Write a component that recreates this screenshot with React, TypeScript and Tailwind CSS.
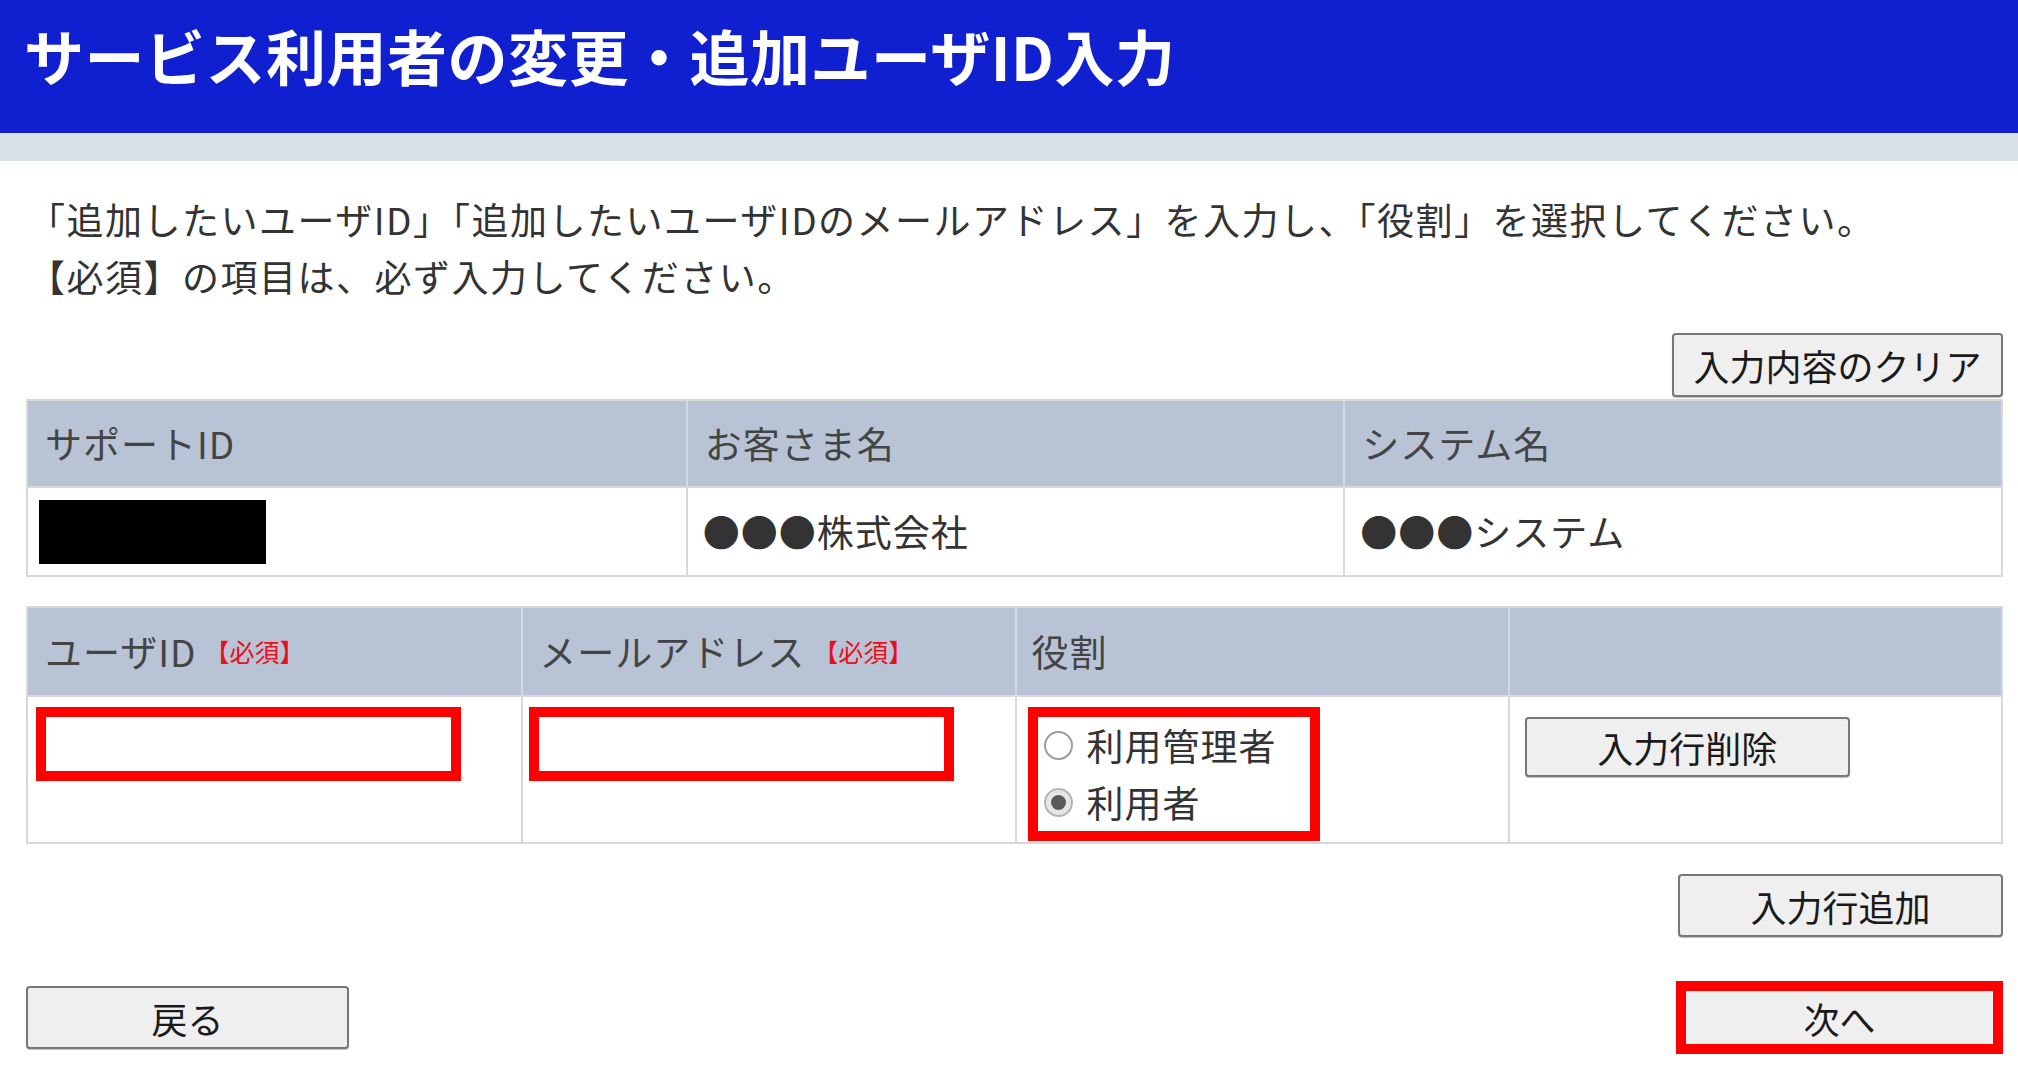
import React from "react";

const btn =
  "flex items-center justify-center bg-[#efefef] border-2 border-[#777777] rounded-[4px] text-[36px] text-[#1a1a1a] leading-none shadow-[0_1px_1px_rgba(0,0,0,0.25)]";

function RedMark() {
  return <span className="ml-[8px] text-[25px] tracking-normal text-[#e8101c]">【必須】</span>;
}

function Radio({ checked }: { checked?: boolean }) {
  return checked ? (
    <span className="flex h-[29px] w-[29px] shrink-0 items-center justify-center rounded-full border-2 border-[#b5b5b5] bg-[#e6e6e6]">
      <span className="h-[15px] w-[15px] rounded-full bg-[#5a5a5a]" />
    </span>
  ) : (
    <span className="h-[29px] w-[29px] shrink-0 rounded-full border-2 border-[#9d9d9d] bg-white" />
  );
}

export default function App() {
  return (
    <div className="w-[2018px] h-[1073px] overflow-hidden bg-white font-[Noto_Sans_CJK_JP,sans-serif]">
      {/* Title bar */}
      <div className="h-[133px] bg-[#1020d0] pl-[24px]">
        <h1 className="text-[60px] font-bold leading-[110px] tracking-[0.5px] text-white">
          サービス利用者の変更・追加ユーザID入力
        </h1>
      </div>
      <div className="h-[28px] bg-[#d9dfe8]" />

      <div className="pl-[26px] pr-[15px]">
        {/* Instructions */}
        <div className="mt-[30px] text-[37px] leading-[57px] tracking-[1.5px] text-[#333333]">
          <p className="pl-[2px]">
            「追加したいユーザID」「追加したいユーザIDのメールアドレス」を入力し、「役割」を選択してください。
          </p>
          <p className="pl-[2px]">【必須】の項目は、必ず入力してください。</p>
        </div>

        {/* Clear button */}
        <div className="mt-[28px] flex justify-end">
          <button className={`${btn} h-[64px] w-[331px]`}>入力内容のクリア</button>
        </div>

        {/* Table 1 */}
        <div className="mt-[2px] border-2 border-[#d8d8d8] text-[37px] tracking-[1px]">
          <div className="grid h-[85px] grid-cols-3 bg-[#b8c4d6] text-[#444444]">
            <div className="flex items-center pl-[17px]">サポートID</div>
            <div className="flex items-center border-l-2 border-[#d3d9e2] pl-[17px]">お客さま名</div>
            <div className="flex items-center border-l-2 border-[#d3d9e2] pl-[17px]">システム名</div>
          </div>
          <div className="grid h-[89px] grid-cols-3 border-t-2 border-[#d8d8d8] text-[#333333]">
            <div className="flex items-center pl-[11px]">
              <div className="h-[64px] w-[227px] bg-black" />
            </div>
            <div className="flex items-center border-l-2 border-[#d8d8d8] pl-[15px]">●●●株式会社</div>
            <div className="flex items-center border-l-2 border-[#d8d8d8] pl-[15px]">●●●システム</div>
          </div>
        </div>

        {/* Table 2 */}
        <div className="mt-[29px] border-2 border-[#d8d8d8] text-[37px] tracking-[1px]">
          <div className="grid h-[87px] grid-cols-4 bg-[#b8c4d6] text-[#444444]">
            <div className="flex items-center pl-[17px]">
              ユーザID
              <RedMark />
            </div>
            <div className="flex items-center border-l-2 border-[#d3d9e2] pl-[16px]">
              メールアドレス
              <RedMark />
            </div>
            <div className="flex items-center border-l-2 border-[#d3d9e2] pl-[15px]">役割</div>
            <div className="border-l-2 border-[#d3d9e2]" />
          </div>
          <div className="grid h-[147px] grid-cols-4 border-t-2 border-[#d8d8d8] text-[#333333]">
            <div className="pl-[8px] pt-[10px]">
              <div className="h-[74px] w-[425px] border-[10px] border-[#ff0000] bg-white" />
            </div>
            <div className="border-l-2 border-[#d8d8d8] pl-[6px] pt-[10px]">
              <div className="h-[74px] w-[425px] border-[10px] border-[#ff0000] bg-white" />
            </div>
            <div className="border-l-2 border-[#d8d8d8] pl-[11px] pt-[10px]">
              <div className="flex h-[134px] w-[292px] flex-col border-[10px] border-[#ff0000] bg-white pl-[6px]">
                <label className="flex h-[57px] shrink-0 items-center gap-[14px]">
                  <Radio />
                  <span>利用管理者</span>
                </label>
                <label className="flex h-[57px] shrink-0 items-center gap-[14px]">
                  <Radio checked />
                  <span>利用者</span>
                </label>
              </div>
            </div>
            <div className="border-l-2 border-[#d8d8d8] pl-[15px] pt-[20px]">
              <button className={`${btn} h-[60px] w-[325px] tracking-normal`}>入力行削除</button>
            </div>
          </div>
        </div>

        {/* Add row */}
        <div className="mt-[30px] flex justify-end">
          <button className={`${btn} h-[63px] w-[325px]`}>入力行追加</button>
        </div>

        {/* Bottom nav */}
        <div className="mt-[44px] flex items-center justify-between">
          <button className={`${btn} h-[63px] w-[323px]`}>戻る</button>
          <button className="flex h-[73px] w-[327px] items-center justify-center border-[10px] border-[#ff0000] bg-[#efefef] text-[36px] leading-none text-[#1a1a1a]">
            次へ
          </button>
        </div>
      </div>
    </div>
  );
}
